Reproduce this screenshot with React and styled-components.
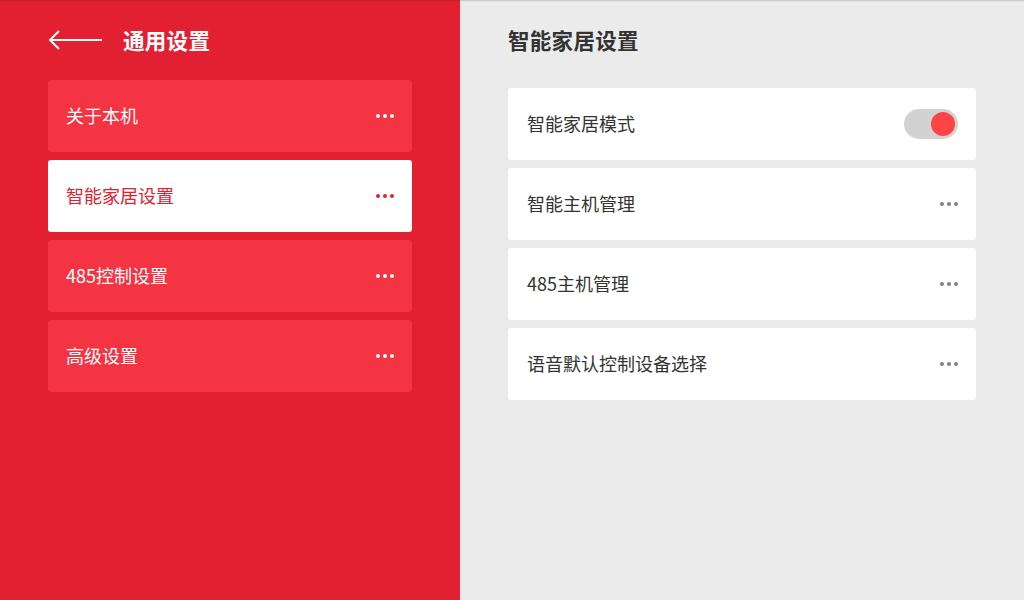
import styled, { createGlobalStyle } from 'styled-components'

const GlobalStyle = createGlobalStyle`
    html, body {
        margin: 0;
        padding: 0;
    }
    body {
        font-family: "Noto Sans CJK SC", "Noto Sans", sans-serif;
    }
`

const Screen = styled.div`
    width: 1024px;
    height: 600px;
    display: flex;
    position: relative;
    overflow: hidden;
    &::after {
        content: "";
        position: absolute;
        left: 0;
        right: 0;
        top: 0;
        height: 2px;
        background: linear-gradient(rgba(0, 0, 0, 0.18), rgba(0, 0, 0, 0));
    }
`
const Sidebar = styled.div`
    width: 460px;
    background-color: #e32032;
    padding: 0 48px;
    box-sizing: border-box;
`
const Header = styled.div`
    height: 80px;
    display: flex;
    align-items: center;
    gap: 20px;
`
const BackButton = styled.div`
    width: 55px;
    height: 24px;
    display: flex;
    align-items: center;
`
const Title = styled.div`
    font-size: 21.5px;
    font-weight: 700;
    letter-spacing: 0.3px;
    margin-bottom: 2px;
    color: ${props => props.$dark ? '#333333' : 'white'};
`
const List = styled.div`
    display: flex;
    flex-direction: column;
    gap: 8px;
`
const MenuItem = styled.div`
    height: 72px;
    border-radius: 3px;
    background-color: ${props => props.$active ? 'white' : '#f43343'};
    color: ${props => props.$active ? '#e32032' : 'white'};
    display: flex;
    align-items: center;
    justify-content: space-between;
    padding: 0 18px;
    font-size: 18px;
`
const Label = styled.span`
    margin-bottom: 3px;
`
const Content = styled.div`
    flex: 1;
    background-color: #ebebeb;
    padding: 0 48px;
`
const ContentHeader = styled.div`
    height: 80px;
    display: flex;
    align-items: center;
`
const Cards = styled.div`
    display: flex;
    flex-direction: column;
    gap: 8px;
    margin-top: 8px;
`
const Card = styled.div`
    height: 72px;
    border-radius: 3px;
    background-color: white;
    color: #333333;
    display: flex;
    align-items: center;
    justify-content: space-between;
    padding: 0 18px 0 19px;
    font-size: 18px;
`
const Dots = styled.div`
    display: flex;
    gap: 3px;
    & span {
        width: 4px;
        height: 4px;
        border-radius: 50%;
        background-color: ${props => props.color};
    }
`
const Toggle = styled.div`
    width: 54px;
    height: 30px;
    border-radius: 15px;
    background-color: #d2d2d2;
    position: relative;
`
const Thumb = styled.div`
    position: absolute;
    right: 3px;
    top: 3px;
    width: 24px;
    height: 24px;
    border-radius: 50%;
    background-color: #fd4446;
`

function More({ color }) {
    return (
        <Dots color={color}>
            <span /><span /><span />
        </Dots>
    )
}

const menu = ['关于本机', '智能家居设置', '485控制设置', '高级设置']
const rows = ['智能主机管理', '485主机管理', '语音默认控制设备选择']

export default function App() {
    return (
        <Screen>
            <GlobalStyle />
            <Sidebar>
                <Header>
                    <BackButton>
                        <svg width="55" height="24" viewBox="0 0 55 24">
                            <path d="M2 12 H54 M11 3 L2 12 L11 21" stroke="white" strokeWidth="2" fill="none" />
                        </svg>
                    </BackButton>
                    <Title>通用设置</Title>
                </Header>
                <List>
                    {menu.map((label, i) => (
                        <MenuItem key={label} $active={i === 1}>
                            <Label>{label}</Label>
                            <More color={i === 1 ? '#e32032' : 'white'} />
                        </MenuItem>
                    ))}
                </List>
            </Sidebar>
            <Content>
                <ContentHeader>
                    <Title $dark>智能家居设置</Title>
                </ContentHeader>
                <Cards>
                    <Card>
                        <Label>智能家居模式</Label>
                        <Toggle><Thumb /></Toggle>
                    </Card>
                    {rows.map(label => (
                        <Card key={label}>
                            <Label>{label}</Label>
                            <More color="#808080" />
                        </Card>
                    ))}
                </Cards>
            </Content>
        </Screen>
    )
}
